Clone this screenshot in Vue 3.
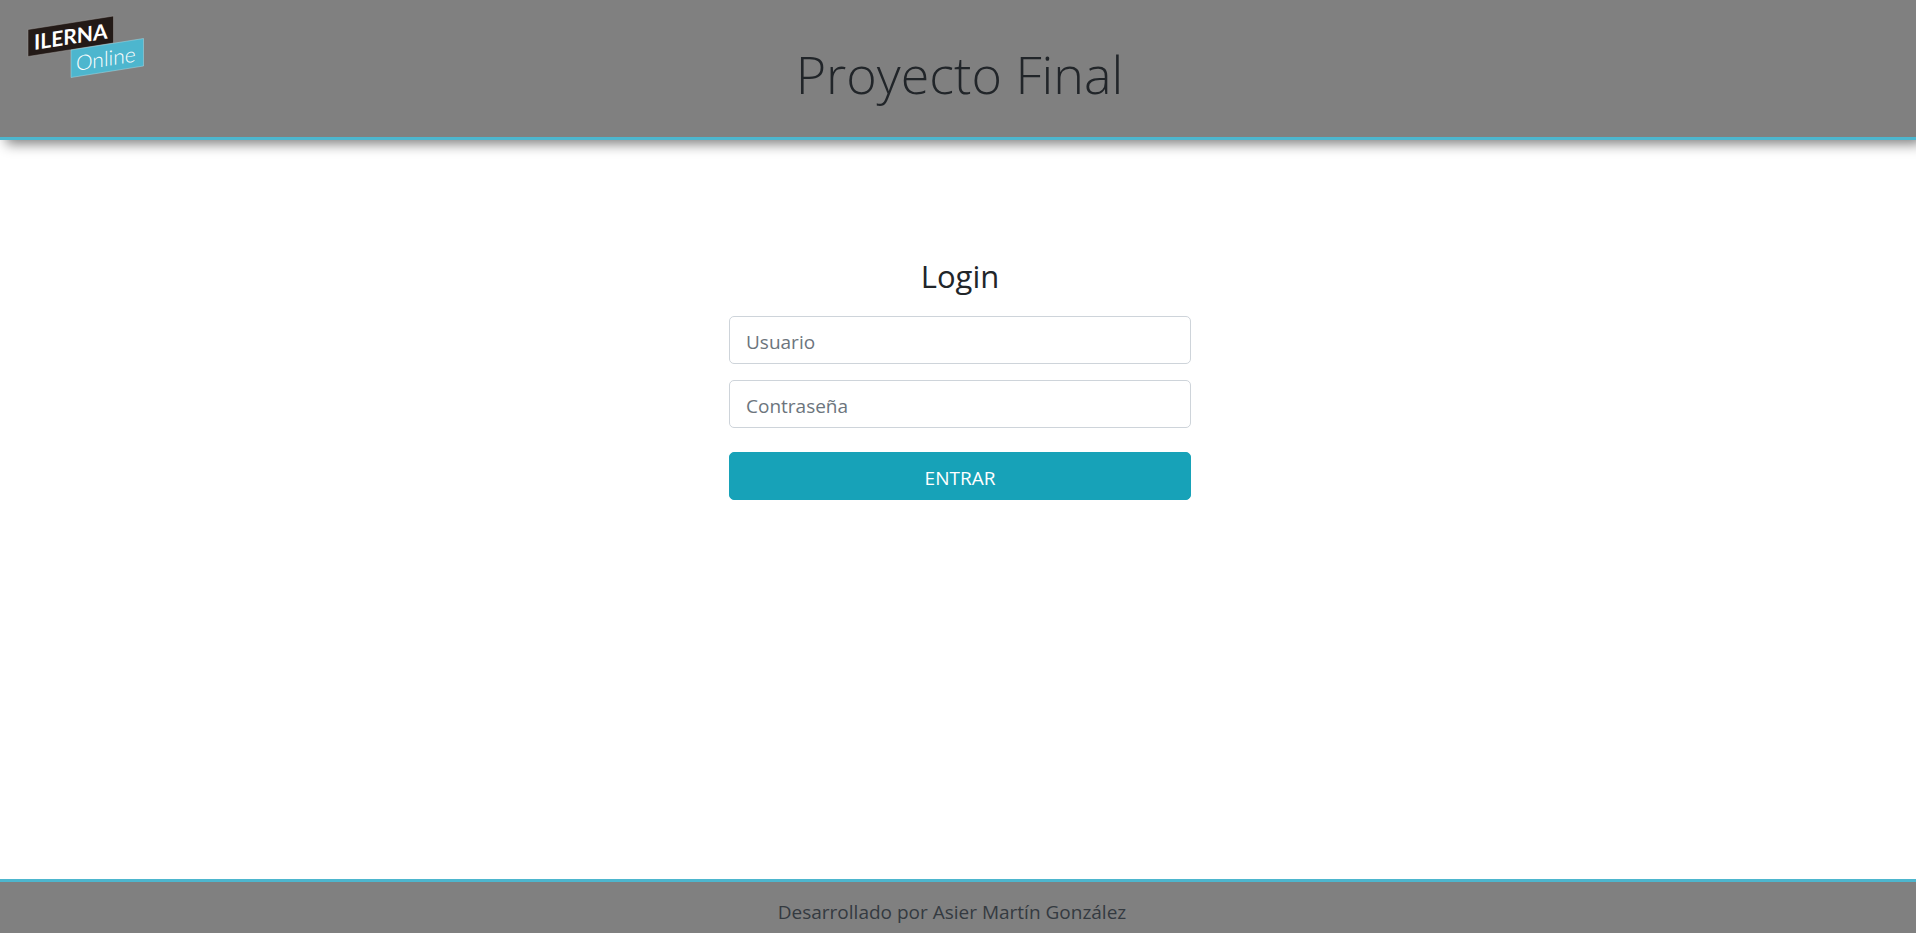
<script setup>
import { ref } from 'vue'

const user = ref('')
const password = ref('')
</script>

<template>
  <div class="page">
    <header class="header">
      <svg class="logo" viewBox="0 0 120 66" role="img" aria-label="ILERNA Online">
        <path class="logo-dark" d="M1 15.500 L86.500 2 V29 L1 42.500 Z" />
        <path class="logo-light" d="M44 36 L116.500 24.500 V52 L44 63.500 Z" />
        <text class="logo-name" transform="translate(7 36) skewY(-9)">ILERNA</text>
        <text class="logo-sub" transform="translate(49 57) skewY(-9)">Online</text>
      </svg>
      <h1 class="title">Proyecto Final</h1>
    </header>

    <main class="main">
      <form class="login" @submit.prevent>
        <h2 class="login-title">Login</h2>
        <input v-model="user" class="field" type="text" placeholder="Usuario" aria-label="Usuario" />
        <input v-model="password" class="field" type="password" placeholder="Contraseña" aria-label="Contraseña" />
        <button class="submit" type="submit">ENTRAR</button>
      </form>
    </main>

    <footer class="footer">Desarrollado por Asier Martín González</footer>
  </div>
</template>

<style>
body {
  margin: 0;
  background: #fff;
}
</style>

<style scoped>
.page {
  display: flex;
  flex-direction: column;
  min-height: 100vh;
  color: #212529;
  font-family: "Segoe UI", "Open Sans", "Noto Sans", sans-serif;
  font-size: 19px;
  line-height: 30px;
}

.header {
  display: grid;
  grid-template-columns: 1fr auto 1fr;
  align-items: start;
  box-sizing: border-box;
  min-height: 140px;
  padding: 14px 24px 0 27px;
  background: #808080;
  border-bottom: 3px solid #4db6ce;
  box-shadow: 6px 4px 12px #808080;
}

.logo {
  width: 120px;
  height: 66px;
}

.logo-dark {
  fill: #231a17;
  stroke: #a09c9a;
  stroke-width: 0.5;
}

.logo-light {
  fill: #4db6ce;
  stroke: #a5dbe7;
  stroke-width: 0.5;
}

.logo text {
  fill: #fff;
  font-family: Lato, sans-serif;
}

.logo-name {
  font-size: 21px;
  font-weight: 700;
}

.logo-sub {
  font-size: 21px;
  font-weight: 300;
}

.title {
  margin: 26px 0 0;
  font-size: 52px;
  font-weight: 300;
  line-height: 68px;
}

.main {
  display: flex;
  flex: 1;
  justify-content: center;
  padding: 116px 12px 24px 16px;
}

.login {
  display: flex;
  flex-direction: column;
  width: 100%;
  max-width: 462px;
}

.login-title {
  margin: 0 0 20px;
  font-size: 31px;
  font-weight: 400;
  line-height: 40px;
  text-align: center;
}

.field,
.submit {
  box-sizing: border-box;
  width: 100%;
  height: 48px;
  padding: 10px 16px 6px;
  border: 1px solid #ced4da;
  border-radius: 5px;
  font: inherit;
}

.field {
  margin: 0 0 16px;
  background: #fff;
  color: #495057;
}

.field::placeholder {
  color: #6c757d;
  opacity: 1;
}

.submit {
  margin-top: 8px;
  background: #17a2b8;
  border-color: #17a2b8;
  color: #fff;
  cursor: pointer;
}

.footer {
  box-sizing: border-box;
  min-height: 54px;
  padding: 15px 12px 6px 0;
  background: #808080;
  border-top: 3px solid #4db6ce;
  color: #343a40;
  text-align: center;
}
</style>
